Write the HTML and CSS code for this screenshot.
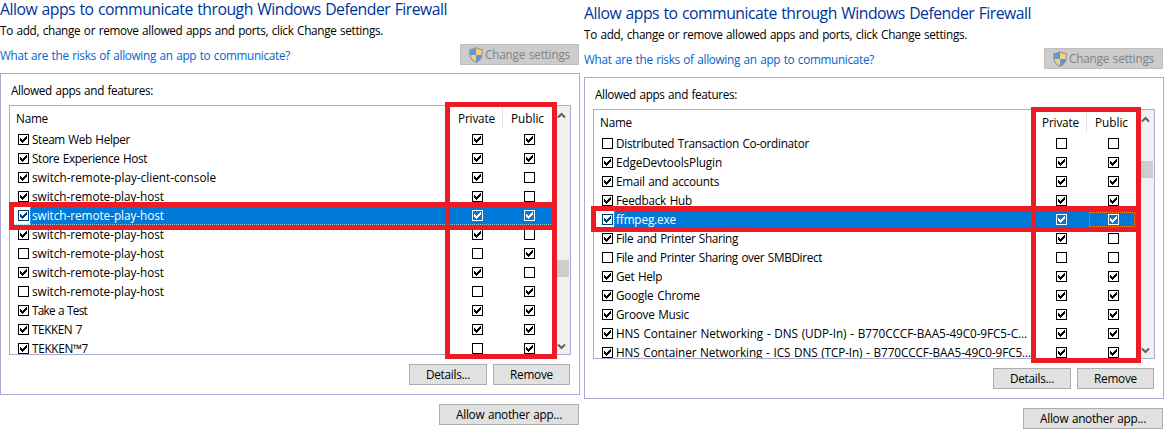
FILE: index.html
```
<!DOCTYPE html>
<html lang="en">
<head>
<meta charset="utf-8">
<title>Allowed apps</title>
<link rel="stylesheet" href="styles.css">
</head>
<body>
<svg class="defs" aria-hidden="true">
  <symbol id="tick" viewBox="0 0 11 11"><path fill="currentColor" shape-rendering="crispEdges" d="M2 4h1v1h1v1h1v-1h1v-1h1v-1h1v-1h1v3h-1v1h-1v1h-1v1h-1v1h-1v-1h-1v-1h-1z"/></symbol>
  <symbol id="shield" viewBox="0 0 14 16">
    <path fill="#8b9097" d="M7 0C5 1.5 2.7 2 .3 2v5c0 4 2.700 7 6.700 9 4-2 6.700-5 6.700-9V2C11.300 2 9 1.500 7 0z"/>
    <path fill="#5a9bd0" d="M7 1.300C5.200 2.400 3.300 2.900 1.300 3v5H7z"/>
    <path fill="#f4cf79" d="M7 1.300c1.800 1.100 3.700 1.600 5.700 1.700v5H7z"/>
    <path fill="#f4cf79" d="M1.300 8c.4 3 2.500 5.300 5.700 7V8z"/>
    <path fill="#5a9bd0" d="M12.700 8c-.4 3-2.500 5.300-5.700 7V8z"/>
  </symbol>
</svg>
<main class="screens"></main>
<script src="app.js"></script>
</body>
</html>
```
FILE: styles.css
```
* { box-sizing: border-box; }
body {
  margin: 0;
  background: #fff;
  color: #000;
  font: 11.75px/19px "Open Sans", "Noto Sans", sans-serif;
  word-spacing: 0.8px;
  overflow: hidden;
}
.defs { position: absolute; width: 0; height: 0; }
.screens { display: flex; gap: 4px; height: 433px; }
.screen { width: 580px; flex: none; }
.screen.lower { padding-top: 4px; }
.t { display: inline-block; white-space: pre; }
.title { height: 21px; font-size: 15.75px; line-height: 18px; color: #003399; }
.desc { height: 23px; line-height: 19px; }
.bar { display: flex; justify-content: space-between; height: 29px; }
.link { color: #0066cc; line-height: 23px; }
.btn {
  display: flex;
  align-items: center;
  justify-content: center;
  height: 21px;
  border: 1px solid #adadad;
  background: #e1e1e1;
  line-height: 19px;
}
.change { width: 119px; margin-right: 1px; gap: 2px; background: #ccc; border-color: #bfbfbf; color: #838383; }
.shield { width: 14px; height: 16px; }
.panel { height: 322px; border: 1px solid #a9aad6; padding: 6px 8px 0; }
.label { height: 25px; padding-left: 2px; line-height: 20px; }
.list {
  position: relative;
  display: flex;
  width: 562px;
  height: 250px;
  border: 1px solid #a9aad6;
}
.table { width: 547px; height: 248px; overflow: hidden; flex: none; }
.head, .row { display: grid; grid-template-columns: 436px 57px 50px; }
.head { height: 24px; line-height: 24px; }
.head .name { padding-left: 6px; }
.head .private { padding-left: 12px; height: 23px; border-right: 1px solid #e5e5e5; }
.head .public { padding-left: 8px; }
.row { height: 19px; }
.cell { display: flex; align-items: center; }
.row .name { padding-left: 8px; gap: 3px; }
.row .private { padding-left: 26px; }
.row .public { padding-left: 21px; }
.check { width: 11px; height: 11px; flex: none; border: 1px solid currentColor; background: #fff; }
.check svg { display: block; width: 11px; height: 11px; margin: -1px; }
.selected { color: #fff; background: linear-gradient(90deg, #fff 20px, #0078d7 20px); }
.selected .check { background: #0078d7; }
.selected .name .check { color: #003e73; background: #fff; }
.selected .name .t { margin-left: -2px; padding-left: 1px; border-left: 1px dotted #ff8728; height: 17px; line-height: 17px; }
.upper .selected { border-bottom: 1px dotted #8ec9d8; }
.upper .selected .cell { height: 19px; }
.scroll { display: flex; flex-direction: column; align-items: center; width: 13px; height: 248px; background: #f0f0f0; padding-right: 4px; }
.scroll svg { width: 9px; height: 7px; margin: 6px 0 4px; flex: none; fill: none; stroke: #606060; stroke-width: 2; }
.track { flex: 1; width: 12px; margin-right: -3px; }
.thumb { height: 17px; background: #cdcdcd; }
.upper .thumb { margin-top: 137px; }
.lower .thumb { margin-top: 34px; }
/* Highlight frames drawn over the list */
.mark { position: absolute; border: 5px solid #ed1c24; }
.upper .columns { left: 435px; top: -4px; width: 112px; height: 257px; }
.upper .line { left: -1px; top: 96px; width: 548px; height: 28px; }
.lower .columns { left: 437px; top: -3px; width: 110px; height: 256px; }
.lower .line { left: -3px; top: 96px; width: 550px; height: 26px; }
.focus { position: absolute; left: 495px; top: 102px; width: 46px; height: 15px; border: 1px dotted #ff8728; }
.actions { display: flex; justify-content: flex-end; gap: 6px; padding: 9px 1px 0 0; }
.details { width: 78px; }
.remove { width: 77px; }
.another { width: 140px; margin: 9px 1px 0 auto; }
```
FILE: app.js
```
const text = (s, w) => `<span class="t" data-w="${w}">${s}</span>`;
const check = on => `<span class="check">${on ? '<svg><use href="#tick"/></svg>' : ''}</span>`;
const host = 'switch-remote-play-host';
const lists = [
  { kind: 'upper', selected: 4, rows: [
    ['Steam Web Helper', 98, 1, 1, 1],
    ['Store Experience Host', 115, 1, 1, 1],
    ['switch-remote-play-client-console', 184, 1, 1, 0],
    [host, 132, 1, 1, 0],
    [host, 132, 1, 1, 1],
    [host, 132, 1, 1, 0],
    [host, 132, 0, 0, 1],
    [host, 132, 1, 1, 0],
    [host, 132, 0, 0, 1],
    ['Take a Test', 55, 1, 1, 1],
    ['TEKKEN 7', 50, 1, 1, 1],
    ['TEKKEN™7', 56, 1, 0, 1]
  ] },
  { kind: 'lower', selected: 4, rows: [
    ['Distributed Transaction Co-ordinator', 193, 0, 0, 0],
    ['EdgeDevtoolsPlugin', 106, 1, 1, 1],
    ['Email and accounts', 103, 1, 1, 1],
    ['Feedback Hub', 76, 1, 1, 1],
    ['ffmpeg.exe', 60, 1, 1, 1],
    ['File and Printer Sharing', 122, 1, 1, 0],
    ['File and Printer Sharing over SMBDirect', 206, 0, 0, 0],
    ['Get Help', 46, 1, 1, 1],
    ['Google Chrome', 84, 1, 1, 1],
    ['Groove Music', 73, 1, 1, 1],
    ['HNS Container Networking - DNS (UDP-In) - B770CCCF-BAA5-49C0-9FC5-C...', 411, 1, 1, 1],
    ['HNS Container Networking - ICS DNS (TCP-In) - B770CCCF-BAA5-49C0-9FC5...', 415, 1, 1, 1]
  ] }
];

document.querySelector('.screens').innerHTML = lists.map(list => `
<section class="screen ${list.kind}">
  <div class="title">${text('Allow apps to communicate through Windows Defender Firewall', 447)}</div>
  <div class="desc">${text('To add, change or remove allowed apps and ports, click Change settings.', 383)}</div>
  <div class="bar">
    <div class="link">${text('What are the risks of allowing an app to communicate?', 290)}</div>
    <div class="btn change"><svg class="shield"><use href="#shield"/></svg>${text('Change settings', 85)}</div>
  </div>
  <div class="panel">
    <div class="label">${text('Allowed apps and features:', 142)}</div>
    <div class="list">
      <div class="table">
        <div class="head">
          <div class="name">${text('Name', 32)}</div>
          <div class="private">${text('Private', 37)}</div>
          <div class="public">${text('Public', 33)}</div>
        </div>
        ${list.rows.map(([name, w, a, b, c], i) => `
        <div class="row${i === list.selected ? ' selected' : ''}">
          <div class="cell name">${check(a)}${text(name, w)}</div>
          <div class="cell private">${check(b)}</div>
          <div class="cell public">${check(c)}</div>
        </div>`).join('')}
      </div>
      <div class="scroll">
        <svg viewBox="0 0 9 7"><path d="M1 5.500 4.500 2 8 5.500"/></svg>
        <div class="track"><div class="thumb"></div></div>
        <svg viewBox="0 0 9 7"><path d="M1 1.500 4.500 5 8 1.500"/></svg>
      </div>
      ${list.kind === 'lower' ? '<div class="focus"></div>' : ''}
      <div class="mark line"></div>
      <div class="mark columns"></div>
    </div>
    <div class="actions">
      <div class="btn details">${text('Details...', 44)}</div>
      <div class="btn remove">${text('Remove', 43)}</div>
    </div>
  </div>
  <div class="btn another">${text('Allow another app...', 106)}</div>
</section>`).join('');

// Spread the difference between natural and wanted width over the letters.
for (const el of document.querySelectorAll('.t')) {
  const range = document.createRange();
  range.selectNodeContents(el);
  const natural = range.getBoundingClientRect().width;
  el.style.letterSpacing = (el.dataset.w - natural) / el.textContent.length + 'px';
}
```
